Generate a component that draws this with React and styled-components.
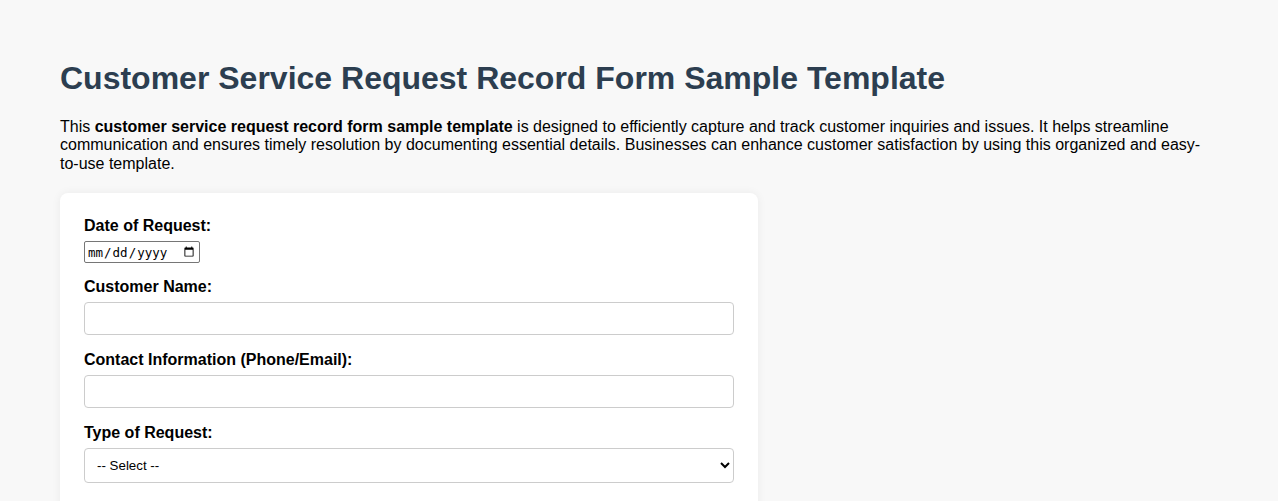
import React, { useState } from 'react';
import styled, { createGlobalStyle } from 'styled-components';

const GlobalStyle = createGlobalStyle`
  body {
    margin: 0;
    background-color: #f8f8f8;
    font-family: Arial, "Liberation Sans", sans-serif;
    color: #000;
  }
`;

const Page = styled.div`
  padding: 60px 60px 37px;
`;

const Title = styled.h1`
  margin: 0 0 21px;
  font-size: 32px;
  font-weight: bold;
  color: #2c3e50;
`;

const Intro = styled.p`
  margin: 0 0 20px;
  font-size: 16px;
  line-height: 18.4px;
`;

const FormCard = styled.form`
  max-width: 650px;
  padding: 24px;
  background-color: #fff;
  border-radius: 8px;
  box-shadow: 0 0 10px rgba(0, 0, 0, 0.06);
`;

const Label = styled.label`
  display: block;
  margin-bottom: 6px;
  font-size: 16px;
  font-weight: bold;
`;

const Field = styled.input`
  display: block;
  box-sizing: border-box;
  width: 100%;
  margin-bottom: 16px;
  padding: 8px;
  border: 1px solid #ccc;
  border-radius: 4px;
  font-family: Arial, "Liberation Sans", sans-serif;
  font-size: 13.33px;
`;

const DateField = styled.input`
  display: block;
  box-sizing: border-box;
  width: 116px;
  height: 22px;
  margin-bottom: 15px;
  padding: 1px 2px;
  border: 1px solid #767676;
  border-radius: 2px;
  font-family: "DejaVu Sans Mono", monospace;
  font-size: 12.5px;
  color: #000;
`;

const Select = styled.select`
  display: block;
  box-sizing: border-box;
  width: 100%;
  height: 35px;
  margin-bottom: 16px;
  padding: 8px;
  border: 1px solid #ccc;
  border-radius: 4px;
  background-color: #fff;
  font-family: Arial, "Liberation Sans", sans-serif;
  font-size: 13.33px;
  color: #000;
`;

const App = () => {
  const [form, setForm] = useState({ date: '', name: '', contact: '', type: '' });

  const handleChange = (e) => {
    const { name, value } = e.target;
    setForm((prev) => ({ ...prev, [name]: value }));
  };

  return (
    <Page>
      <GlobalStyle />
      <Title>Customer Service Request Record Form Sample Template</Title>
      <Intro>
        This <strong>customer service request record form sample template</strong> is designed to efficiently capture and track customer inquiries and issues. It helps streamline communication and ensures timely resolution by documenting essential details. Businesses can enhance customer satisfaction by using this organized and easy-to-use template.
      </Intro>

      <FormCard onSubmit={ (e) => e.preventDefault() }>
        <Label htmlFor="date">Date of Request:</Label>
        <DateField id="date" name="date" type="date" value={ form.date } onChange={ handleChange } />

        <Label htmlFor="name">Customer Name:</Label>
        <Field id="name" name="name" type="text" value={ form.name } onChange={ handleChange } />

        <Label htmlFor="contact">Contact Information (Phone/Email):</Label>
        <Field id="contact" name="contact" type="text" value={ form.contact } onChange={ handleChange } />

        <Label htmlFor="type">Type of Request:</Label>
        <Select id="type" name="type" value={ form.type } onChange={ handleChange }>
          <option value="">-- Select --</option>
          <option value="inquiry">Inquiry</option>
          <option value="complaint">Complaint</option>
          <option value="support">Technical Support</option>
          <option value="other">Other</option>
        </Select>
      </FormCard>
    </Page>
  );
};

export default App;
